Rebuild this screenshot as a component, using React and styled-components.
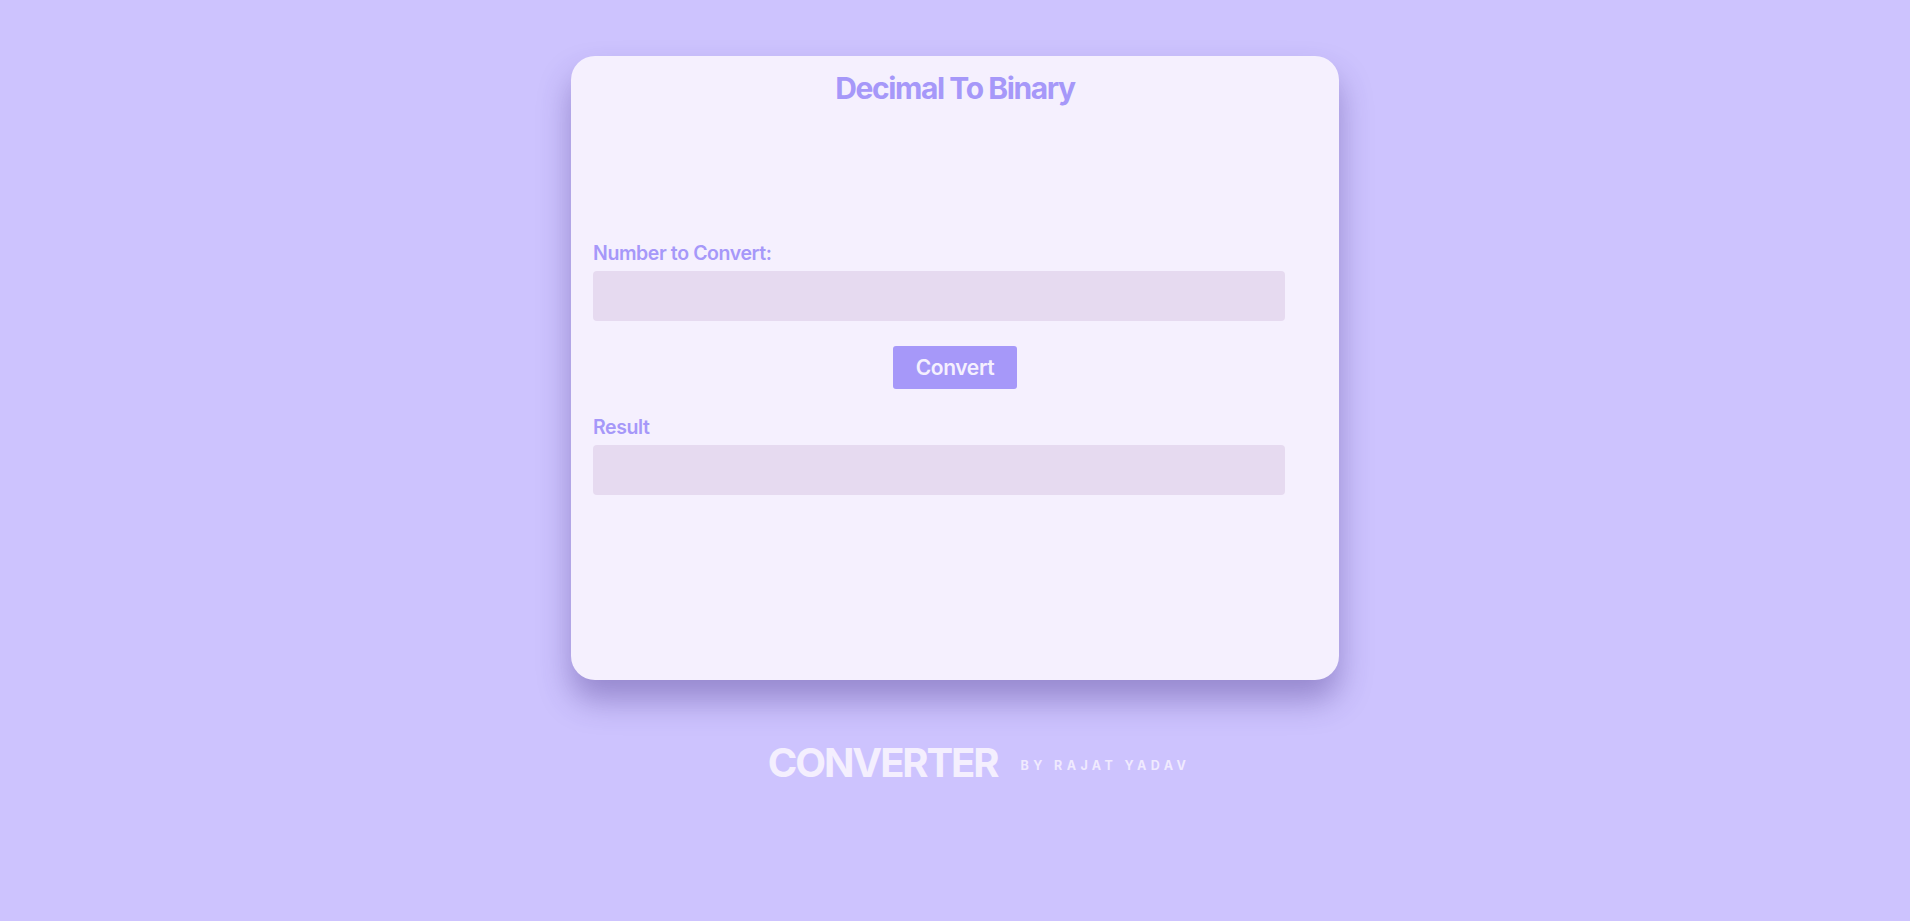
import React from "react";
import styled, { createGlobalStyle } from "styled-components";

const Global = createGlobalStyle`
  html, body { margin: 0; padding: 0; }
  body {
    background: #cdc3fe;
    font-family: Inter, "Open Sans", "Liberation Sans", sans-serif;
    min-height: 921px;
  }
`;

const Page = styled.div`
  display: flex;
  flex-direction: column;
  align-items: center;
  padding-top: 56px;
`;

const Card = styled.main`
  width: 768px;
  height: 624px;
  box-sizing: border-box;
  background: #f5f0fe;
  border-radius: 24px;
  box-shadow: 0 20px 32px rgba(60, 40, 130, 0.38);
  padding: 0 54px 0 22px;
  display: flex;
  flex-direction: column;
`;

const Title = styled.h1`
  margin: 14px 0 0 0;
  text-align: center;
  padding-left: 32px;
  font-size: 30px;
  line-height: 36px;
  font-weight: 700;
  letter-spacing: -1.4px;
  color: #a698f9;
`;

const Form = styled.div`
  margin-top: 135px;
  display: flex;
  flex-direction: column;
`;

const Label = styled.label`
  font-size: 19.5px;
  line-height: 24px;
  font-weight: 600;
  letter-spacing: -0.4px;
  color: #a698f9;
  margin-bottom: 6px;
`;

const Field = styled.div`
  height: 50px;
  width: 692px;
  background: #e6daf0;
  border-radius: 4px;
`;

const ButtonRow = styled.div`
  display: flex;
  justify-content: center;
  padding-left: 32px;
  margin: 25px 0 26px;
`;

const Button = styled.button`
  width: 124px;
  height: 43px;
  border: none;
  border-radius: 3px;
  background: #a698f9;
  color: #f5f0fe;
  font-family: inherit;
  font-size: 21px;
  font-weight: 600;
  letter-spacing: -0.4px;
  cursor: pointer;
  padding: 0;
`;

const Footer = styled.footer`
  display: flex;
  align-items: center;
  gap: 23px;
  margin-top: 58px;
  padding-left: 48px;
`;

const Brand = styled.span`
  font-size: 40px;
  line-height: 50px;
  font-weight: 700;
  letter-spacing: -2.1px;
  color: #f4effe;
`;

const Byline = styled.span`
  font-size: 12.5px;
  font-weight: 700;
  letter-spacing: 4.4px;
  color: #f0eafe;
  margin-top: 4px;
`;

export default function App() {
  return (
    <>
      <Global />
      <Page>
        <Card>
          <Title>Decimal To Binary</Title>
          <Form>
            <Label>Number to Convert:</Label>
            <Field />
            <ButtonRow>
              <Button>Convert</Button>
            </ButtonRow>
            <Label>Result</Label>
            <Field />
          </Form>
        </Card>
        <Footer>
          <Brand>CONVERTER</Brand>
          <Byline>BY RAJAT YADAV</Byline>
        </Footer>
      </Page>
    </>
  );
}
